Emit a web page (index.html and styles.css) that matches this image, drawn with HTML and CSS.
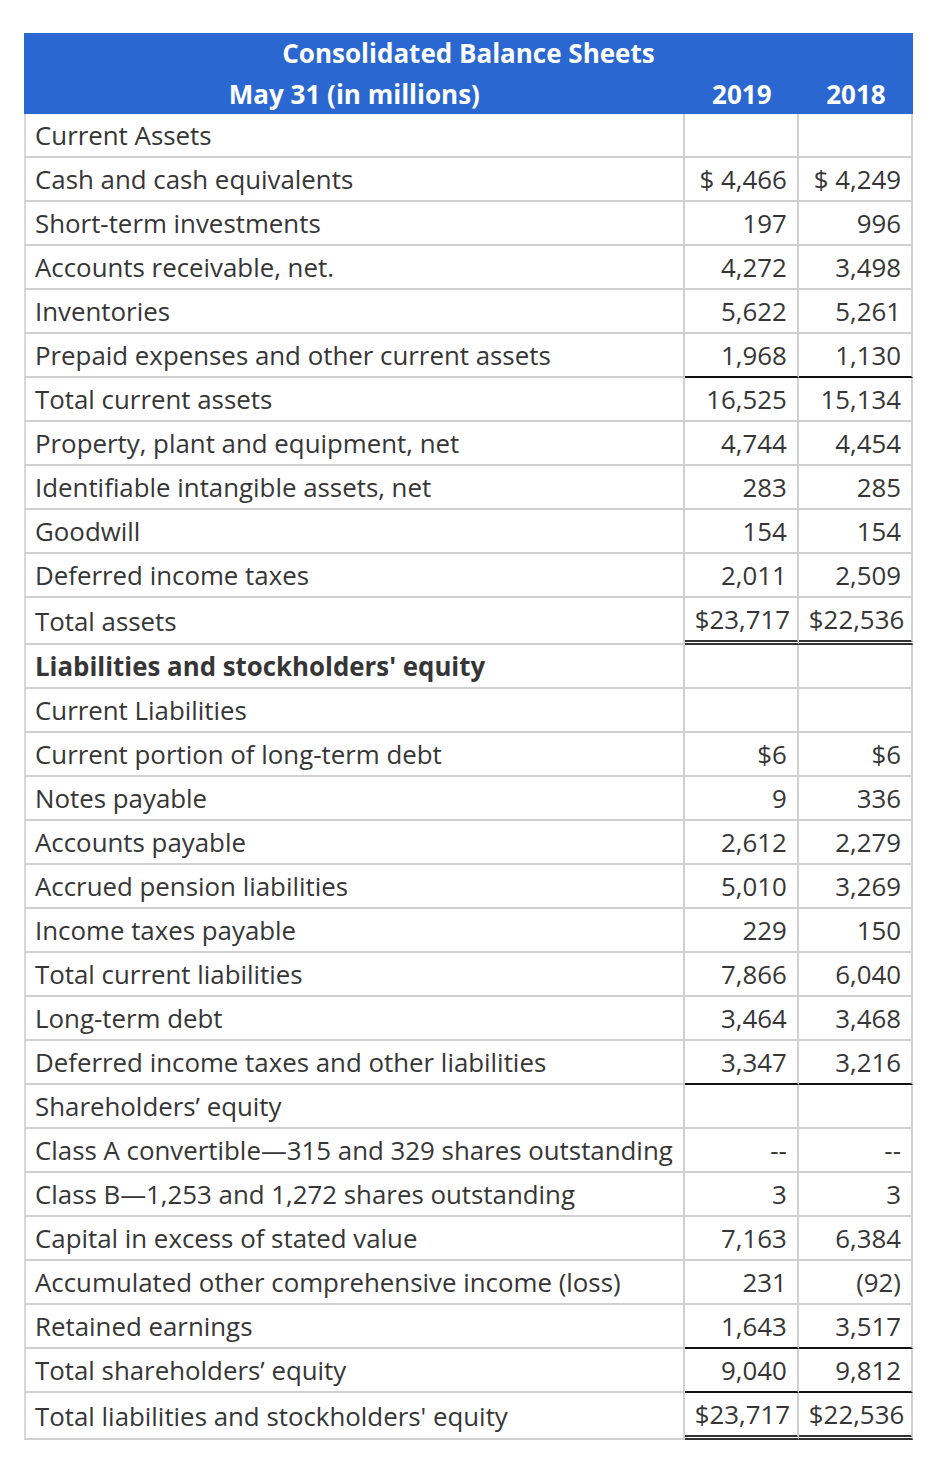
FILE: index.html
```html
<!DOCTYPE html>
<html>
<head>
<meta charset="utf-8">
<link rel="stylesheet" href="styles.css">
</head>
<body>
<table class="sheet">
  <colgroup>
    <col class="c-label">
    <col class="c-val">
    <col class="c-val">
  </colgroup>
  <thead>
    <tr class="h1"><th colspan="3">Consolidated Balance Sheets</th></tr>
    <tr class="h2"><th>May 31 (in millions)</th><th>2019</th><th>2018</th></tr>
  </thead>
  <tbody>
    <tr><td>Current Assets</td><td></td><td></td></tr>
    <tr><td>Cash and cash equivalents</td><td>$ 4,466</td><td>$ 4,249</td></tr>
    <tr><td>Short-term investments</td><td>197</td><td>996</td></tr>
    <tr><td>Accounts receivable, net.</td><td>4,272</td><td>3,498</td></tr>
    <tr><td>Inventories</td><td>5,622</td><td>5,261</td></tr>
    <tr class="under"><td>Prepaid expenses and other current assets</td><td>1,968</td><td>1,130</td></tr>
    <tr><td>Total current assets</td><td>16,525</td><td>15,134</td></tr>
    <tr><td>Property, plant and equipment, net</td><td>4,744</td><td>4,454</td></tr>
    <tr><td>Identifiable intangible assets, net</td><td>283</td><td>285</td></tr>
    <tr><td>Goodwill</td><td>154</td><td>154</td></tr>
    <tr><td>Deferred income taxes</td><td>2,011</td><td>2,509</td></tr>
    <tr class="dbl"><td>Total assets</td><td>$23,717</td><td>$22,536</td></tr>
    <tr><td class="bold">Liabilities and stockholders' equity</td><td></td><td></td></tr>
    <tr><td>Current Liabilities</td><td></td><td></td></tr>
    <tr><td>Current portion of long-term debt</td><td>$6</td><td>$6</td></tr>
    <tr><td>Notes payable</td><td>9</td><td>336</td></tr>
    <tr><td>Accounts payable</td><td>2,612</td><td>2,279</td></tr>
    <tr><td>Accrued pension liabilities</td><td>5,010</td><td>3,269</td></tr>
    <tr><td>Income taxes payable</td><td>229</td><td>150</td></tr>
    <tr><td>Total current liabilities</td><td>7,866</td><td>6,040</td></tr>
    <tr><td>Long-term debt</td><td>3,464</td><td>3,468</td></tr>
    <tr class="under"><td>Deferred income taxes and other liabilities</td><td>3,347</td><td>3,216</td></tr>
    <tr><td>Shareholders’ equity</td><td></td><td></td></tr>
    <tr><td>Class A convertible—315 and 329 shares outstanding</td><td>--</td><td>--</td></tr>
    <tr><td>Class B—1,253 and 1,272 shares outstanding</td><td>3</td><td>3</td></tr>
    <tr><td>Capital in excess of stated value</td><td>7,163</td><td>6,384</td></tr>
    <tr><td>Accumulated other comprehensive income (loss)</td><td>231</td><td>(92)</td></tr>
    <tr class="under"><td>Retained earnings</td><td>1,643</td><td>3,517</td></tr>
    <tr class="under"><td>Total shareholders’ equity</td><td>9,040</td><td>9,812</td></tr>
    <tr class="dbl"><td>Total liabilities and stockholders' equity</td><td>$23,717</td><td>$22,536</td></tr>
  </tbody>
</table>
</body>
</html>
```

FILE: styles.css
```css
body {
  margin: 0;
  background: #ffffff;
  font-family: "Open Sans", "Liberation Sans", sans-serif;
  color: #363636;
}

.sheet {
  margin: 33px 0 0 24px;
  border-collapse: separate;
  border-spacing: 0;
  table-layout: fixed;
  width: 889px;
  font-size: 25.85px;
}

.c-label { width: 660px; }
.c-val { width: 114px; }

.sheet thead th {
  background: #2a67d0;
  color: #ffffff;
  font-size: 26px;
  font-weight: 700;
  text-align: center;
  padding: 0;
  white-space: nowrap;
}

.sheet .h1 th {
  height: 41px;
  line-height: 41px;
}

.sheet .h2 th {
  height: 40px;
  line-height: 40px;
}

.sheet tbody td {
  height: 42px;
  line-height: 42px;
  padding: 0 10px;
  border-bottom: 2px solid #d0d0d0;
  border-right: 2px solid #d0d0d0;
  text-align: right;
  white-space: nowrap;
  vertical-align: middle;
}

.sheet tbody td:first-child {
  text-align: left;
  border-left: 2px solid #d8d8d8;
  padding-left: 9px;
}

.sheet tbody td.bold {
  font-weight: 700;
}

.sheet tbody tr.under td + td {
  border-bottom-color: #111111;
}

.sheet tbody tr.dbl td + td {
  border-bottom: 5px double #333333;
}
```
